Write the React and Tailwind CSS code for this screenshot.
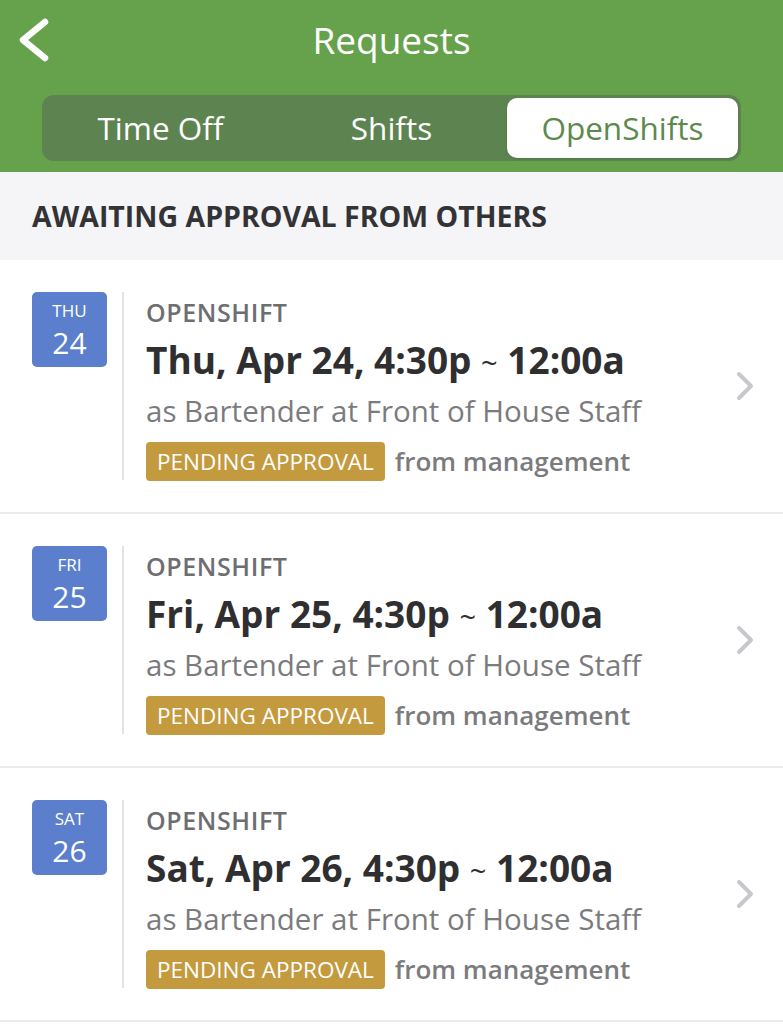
const SHIFTS = [
  { dow: 'THU', day: '24', title: 'Thu, Apr 24, 4:30p', end: '12:00a' },
  { dow: 'FRI', day: '25', title: 'Fri, Apr 25, 4:30p', end: '12:00a' },
  { dow: 'SAT', day: '26', title: 'Sat, Apr 26, 4:30p', end: '12:00a' },
]

const TABS = ['Time Off', 'Shifts', 'OpenShifts']

function ShiftRow({ shift }) {
  return (
    <div className="flex h-[254px] pt-[32px] pb-[32px] border-b-2 border-[#ececef] bg-white">
      {/* Date badge */}
      <div className="ml-[32px] w-[75px] h-[75px] pt-[7px] rounded-[5px] bg-[#5b7fcc] flex flex-col items-center text-white">
        <span className="text-[17px] leading-[23px]">{shift.dow}</span>
        <span className="text-[30px] leading-[41px]">{shift.day}</span>
      </div>
      <div className="ml-[15px] w-[2px] bg-[#e3e3e6]" />

      {/* Body */}
      <div className="flex-1 ml-[22px]">
        <p className="text-[25px] leading-[40px] font-semibold text-[#6e6e70] tracking-[0.6px]">OPENSHIFT</p>
        <p className="text-[37px] leading-[56px] font-bold text-[#2f2f31] whitespace-nowrap">
          {shift.title} <span className="font-normal text-[29px]">~</span> {shift.end}
        </p>
        <p className="text-[29.5px] leading-[40px] text-[#7b7b7e] whitespace-nowrap">as Bartender at Front of House Staff</p>
        <div className="flex items-center mt-[11px]">
          <span className="h-[39px] px-[11px] rounded-[4px] bg-[#c49a3e] text-white text-[22.5px] leading-[39px]">
            PENDING APPROVAL
          </span>
          <span className="ml-[10px] text-[26px] font-semibold text-[#7b7b7e]">from management</span>
        </div>
      </div>

      <svg className="self-center mr-[28px]" width="20" height="30" viewBox="0 0 20 30" fill="none">
        <polyline points="4,3 16,15 4,27" stroke="#c8c8cc" strokeWidth="4" strokeLinecap="round" strokeLinejoin="round" />
      </svg>
    </div>
  )
}

export default function App() {
  return (
    <div className="w-[783px] h-[1024px] overflow-hidden bg-white" style={{ fontFamily: '"Open Sans", sans-serif' }}>
      {/* Header */}
      <div className="bg-[#66a14c] h-[172px] pt-[8px]">
        <div className="relative flex items-center justify-center h-[64px]">
          <svg className="absolute left-[16px] top-[8px]" width="36" height="48" viewBox="0 0 36 48" fill="none">
            <polyline points="29,6 7,24 29,42" stroke="white" strokeWidth="6.5" strokeLinecap="round" strokeLinejoin="round" />
          </svg>
          <h1 className="text-[37px] text-white">Requests</h1>
        </div>
        <div className="mx-[42px] mt-[23px] h-[66px] rounded-[12px] bg-[#5d8450] p-[3px] flex">
          {TABS.map((t, i) => (
            <div
              key={t}
              className={
                i === 2
                  ? 'flex-1 rounded-[10px] bg-white flex items-center justify-center text-[31.5px] text-[#5d8a4c] shadow'
                  : 'flex-1 flex items-center justify-center text-[31.5px] text-white'
              }
            >
              {t}
            </div>
          ))}
        </div>
      </div>

      {/* Section header */}
      <div className="h-[88px] bg-[#f5f4f7] flex items-center px-[32px]">
        <h2 className="text-[28.5px] font-bold text-[#333335] whitespace-nowrap">AWAITING APPROVAL FROM OTHERS</h2>
      </div>

      {SHIFTS.map((s) => (
        <ShiftRow key={s.dow} shift={s} />
      ))}
    </div>
  )
}
